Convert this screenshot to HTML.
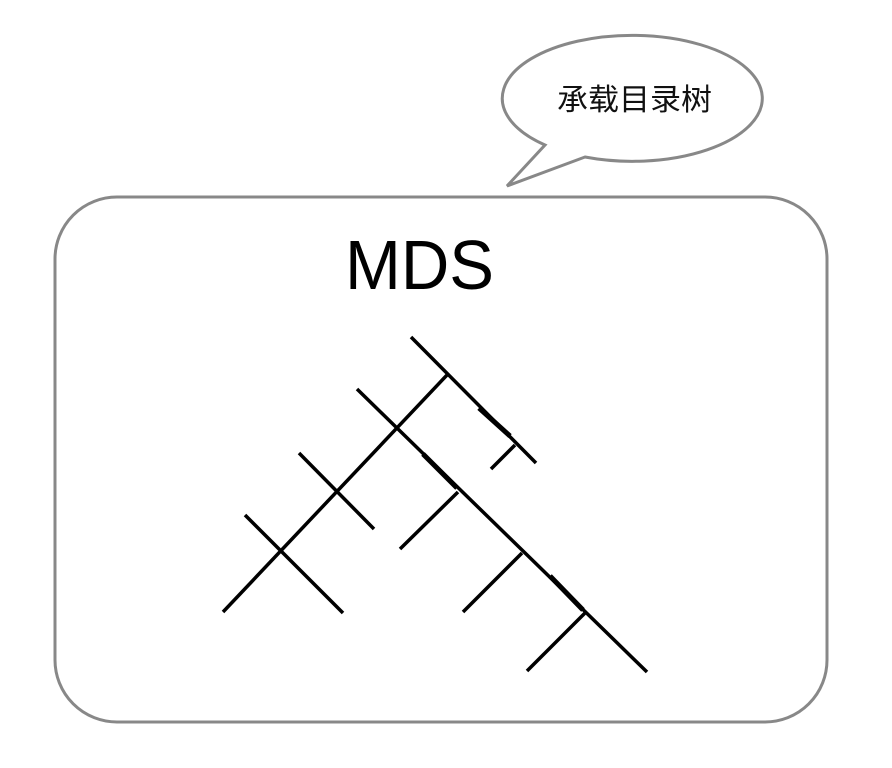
<!DOCTYPE html>
<html><head><meta charset="utf-8"><style>html,body{margin:0;padding:0;background:#fff;width:892px;height:768px;overflow:hidden}</style></head>
<body>
<svg width="892" height="768" viewBox="0 0 892 768" xmlns="http://www.w3.org/2000/svg">
<rect x="55" y="197" width="772" height="525" rx="62" ry="62" fill="none" stroke="#888" stroke-width="3"/>
<path d="M545,145 A130,63 0 1 1 585,157 L507,186 Z" fill="#fff" stroke="#888" stroke-width="3" stroke-linejoin="miter"/>
<text x="557" y="110" font-family="Liberation Sans, Noto Sans CJK SC, sans-serif" font-size="30" textLength="155" lengthAdjust="spacingAndGlyphs" fill="#111">承载目录树</text>
<text x="345" y="289" font-family="Liberation Sans, sans-serif" font-size="70" textLength="149" lengthAdjust="spacingAndGlyphs" fill="#000">MDS</text>
<g stroke="#000" stroke-width="3.5" fill="none">
<line x1="411" y1="337" x2="536" y2="463"/>
<line x1="447" y1="375" x2="223" y2="612"/>
<line x1="357" y1="389" x2="647" y2="672"/>
<line x1="299" y1="453" x2="374" y2="529"/>
<line x1="245" y1="515" x2="343" y2="613"/>
<line x1="515" y1="445" x2="491" y2="469"/>
<line x1="458" y1="492" x2="400" y2="549"/>
<line x1="522" y1="553" x2="463" y2="612"/>
<line x1="585" y1="613" x2="527" y2="671"/>
</g>
<g stroke="#000" stroke-width="5">
<line x1="479" y1="408" x2="510" y2="436"/>
<line x1="423" y1="454" x2="457" y2="488"/>
<line x1="550" y1="576" x2="583" y2="610"/>
</g>
</svg>
</body></html>
